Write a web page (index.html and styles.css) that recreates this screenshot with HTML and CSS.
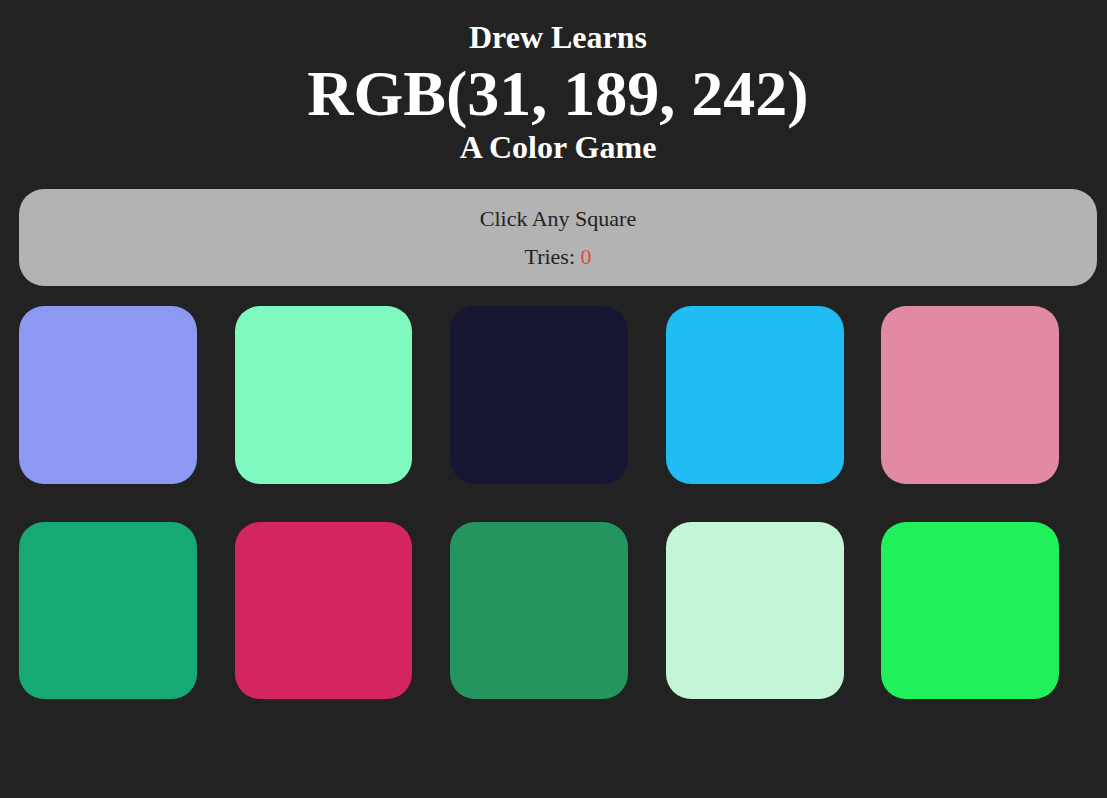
FILE: index.html
```html
<!DOCTYPE html>
<html>
<head>
<meta charset="utf-8">
<link rel="stylesheet" href="styles.css">
</head>
<body>
<div class="container">
  <header class="header">
    <h1 class="title">
      <span class="title-top">Drew Learns</span>
      <span class="title-rgb">RGB(31, 189, 242)</span>
      <span class="title-bottom">A Color Game</span>
    </h1>
  </header>
  <main class="main">
    <section class="panel">
      <p class="message">Click Any Square</p>
      <p class="tries">Tries: <span class="tries-count">0</span></p>
    </section>
    <section class="grid">
      <div class="square" style="background:#8c98f2"></div>
      <div class="square" style="background:#7efac0"></div>
      <div class="square" style="background:#161632"></div>
      <div class="square" style="background:#1fbdf2"></div>
      <div class="square" style="background:#e18aa1"></div>
      <div class="square" style="background:#16a973"></div>
      <div class="square" style="background:#d42560"></div>
      <div class="square" style="background:#24955f"></div>
      <div class="square" style="background:#c4f5d6"></div>
      <div class="square" style="background:#20f05a"></div>
    </section>
  </main>
</div>
</body>
</html>
```
FILE: styles.css
```css
html, body {
  margin: 0;
  padding: 0;
  background: #222222;
  font-family: "Liberation Serif", "Times New Roman", serif;
}

.container {
  margin: 0 10px 0 19px;
}

.header {
  padding-top: 18px;
  text-align: center;
  color: #ffffff;
}

.title {
  margin: 0;
  font-weight: bold;
}

.title-top {
  display: block;
  font-size: 32px;
  line-height: 38px;
}

.title-rgb {
  display: block;
  font-size: 64px;
  line-height: 75px;
}

.title-bottom {
  display: block;
  font-size: 32px;
  line-height: 32px;
}

.main {
  margin-top: 26px;
}

.panel {
  background: #b3b3b3;
  border-radius: 25px;
  height: 97px;
  box-sizing: border-box;
  padding-top: 11px;
  text-align: center;
  color: #222222;
  font-size: 22px;
}

.message, .tries {
  margin: 0;
  line-height: 38px;
}

.tries-count {
  color: #e2473a;
}

.grid {
  display: flex;
  flex-wrap: wrap;
  margin-top: 20px;
}

.square {
  width: 16.5%;
  padding-bottom: 16.5%;
  margin-right: 3.5%;
  margin-bottom: 3.5%;
  border-radius: 25px;
}
```
